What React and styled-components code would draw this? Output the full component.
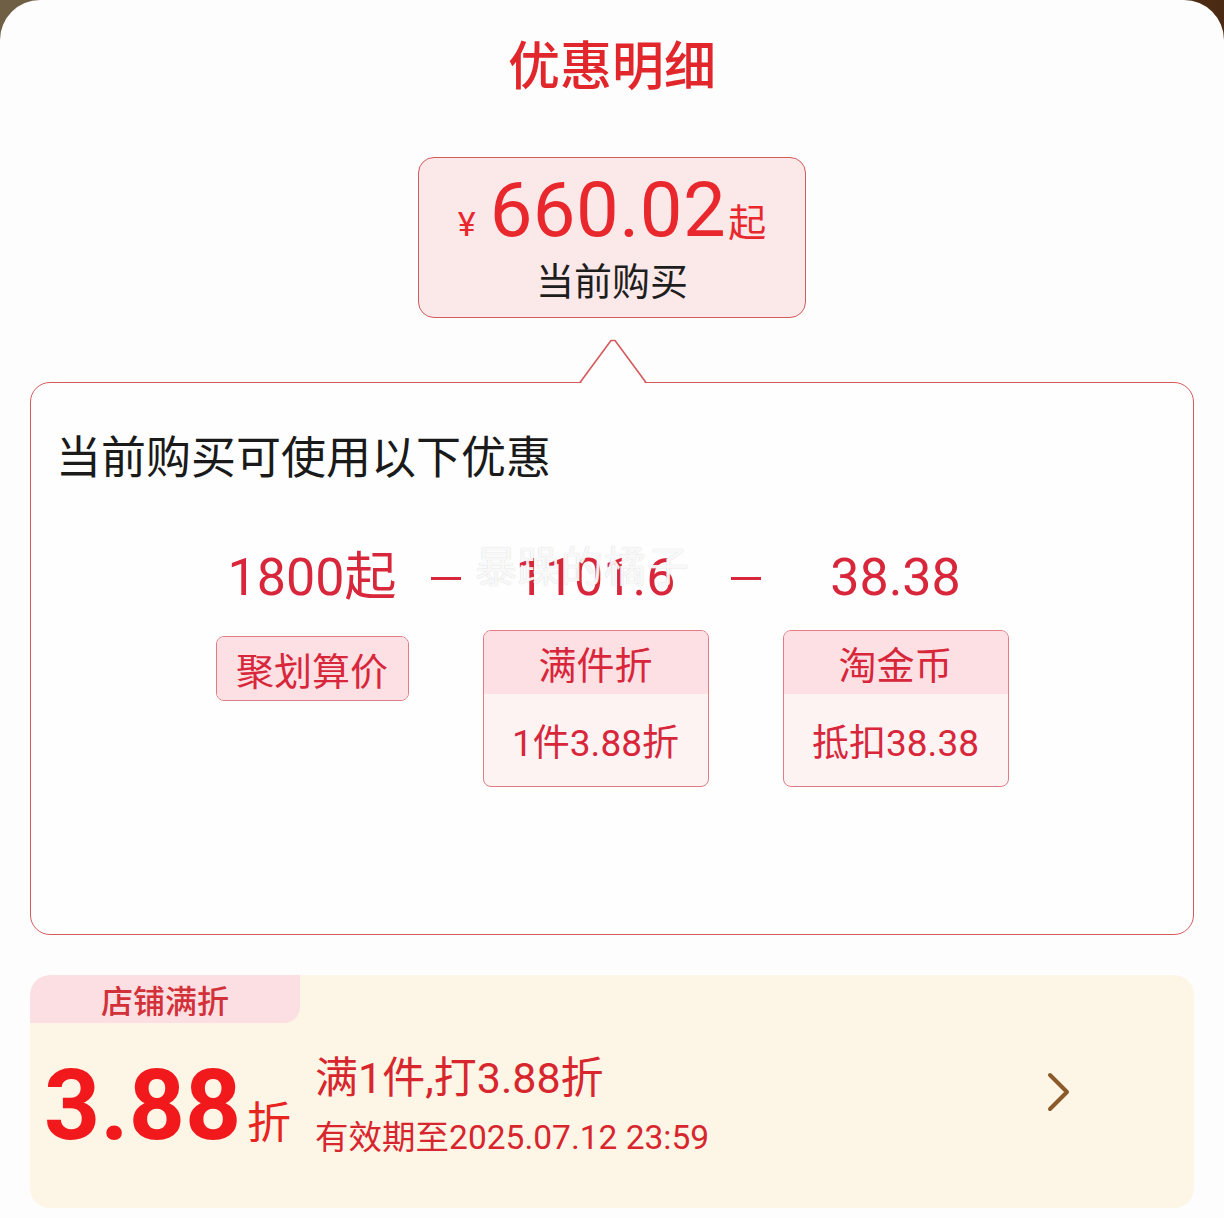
import React from "react";
import styled, { createGlobalStyle } from "styled-components";

const Global = createGlobalStyle`
  html, body { margin: 0; padding: 0; }
  body {
    font-family: Roboto, "Noto Sans CJK SC", sans-serif;
    background: #fefefe;
  }
`;

const Screen = styled.div`
  width: 1224px;
  height: 1218px;
  background: linear-gradient(90deg, #6e5f45 0%, #5e4630 50%, #4a2a12 100%);
  overflow: hidden;
`;

const Sheet = styled.div`
  position: relative;
  height: 1218px;
  background: #fdfdfd;
  border-radius: 40px 40px 0 0;
  padding: 0 30px;
  box-sizing: border-box;
  display: flex;
  flex-direction: column;
  align-items: center;
`;

const Title = styled.h1`
  margin: 33px 0 0;
  font-size: 52px;
  line-height: 60px;
  font-weight: 500;
  color: #e1262c;
  font-family: "Noto Sans CJK SC", sans-serif;
`;

const PriceBox = styled.div`
  margin-top: 64px;
  width: 388px;
  height: 161px;
  box-sizing: border-box;
  border: 1.5px solid #d65a5c;
  border-radius: 16px;
  background: #fbe8e9;
  display: flex;
  flex-direction: column;
  align-items: center;
`;

const PriceLine = styled.div`
  display: flex;
  align-items: baseline;
  color: #e9282e;
  margin-top: 8px;
  height: 88px;
`;

const Yen = styled.span`
  font-size: 34px;
  margin-right: 14px;
`;

const Amount = styled.span`
  font-size: 76px;
  line-height: 88px;
  letter-spacing: 0.5px;
`;

const Qi = styled.span`
  font-size: 38px;
  font-family: "Noto Sans CJK SC", sans-serif;
  margin-left: 2px;
`;

const PriceLabel = styled.div`
  font-size: 38px;
  line-height: 50px;
  color: #1e1e1e;
  font-family: "Noto Sans CJK SC", sans-serif;
`;

const Panel = styled.div`
  position: relative;
  margin-top: 64px;
  align-self: stretch;
  height: 553px;
  box-sizing: border-box;
  border: 1.5px solid #d65a5c;
  border-radius: 20px;
  background: #fefefe;
  padding: 44px 0 0 25px;
`;

const Arrow = styled.svg`
  position: absolute;
  left: 549px;
  top: -44px;
  width: 66px;
  height: 46px;
  overflow: visible;
`;

const PanelHeading = styled.div`
  font-size: 45px;
  line-height: 56px;
  color: #1a1a1a;
  font-family: "Noto Sans CJK SC", sans-serif;
`;

const Flow = styled.div`
  display: flex;
  justify-content: center;
  align-items: flex-start;
  gap: 20px;
  margin: 63px 25px 0 0;
`;

const Column = styled.div`
  display: flex;
  flex-direction: column;
  align-items: center;
`;

const Value = styled.div`
  font-size: 52px;
  line-height: 64px;
  height: 64px;
  color: #d8263b;
  white-space: nowrap;
`;

const Minus = styled.div`
  width: 30px;
  height: 64px;
  display: flex;
  align-items: center;
  margin: 0 2px;
  &::before {
    content: "";
    display: block;
    width: 30px;
    height: 3px;
    background: #d8263b;
  }
`;

const Tag = styled.div`
  margin-top: ${(p) => p.$offset || 0}px;
  box-sizing: border-box;
  width: ${(p) => p.$w}px;
  border: 1.5px solid #e07c82;
  border-radius: 8px;
  overflow: hidden;
  background: #fdf3f3;
  color: #d8263b;
  font-family: "Noto Sans CJK SC", sans-serif;
`;

const TagHead = styled.div`
  height: ${(p) => p.$h}px;
  background: #fde0e3;
  display: flex;
  align-items: center;
  justify-content: center;
  font-size: 38px;
`;

const TagBody = styled.div`
  height: 92px;
  display: flex;
  align-items: center;
  justify-content: center;
  font-size: 37px;
  font-family: Roboto, "Noto Sans CJK SC", sans-serif;
`;

const Watermark = styled.div`
  position: absolute;
  left: 444px;
  top: 150px;
  font-size: 42px;
  letter-spacing: 1px;
  color: rgba(255, 255, 255, 0.9);
  text-shadow: 0 0 1px rgba(150, 150, 150, 0.5);
  font-family: "Noto Sans CJK SC", sans-serif;
  pointer-events: none;
`;

const ShopCard = styled.div`
  margin-top: 40px;
  align-self: stretch;
  height: 233px;
  border-radius: 20px;
  background: #fdf5e6;
  display: flex;
  flex-direction: column;
  overflow: hidden;
`;

const ShopTag = styled.div`
  width: 270px;
  height: 48px;
  background: #fcdfe2;
  border-radius: 20px 0 16px 0;
  color: #d33139;
  font-size: 32px;
  line-height: 48px;
  text-align: center;
  font-family: "Noto Sans CJK SC", sans-serif;
  font-weight: 500;
`;

const ShopRow = styled.div`
  display: flex;
  align-items: center;
  padding: 28px 0 0 14px;
`;

const Big = styled.div`
  display: flex;
  align-items: baseline;
  color: #f2191c;
`;

const BigNum = styled.span`
  font-size: 98px;
  font-weight: 700;
  line-height: 110px;
`;

const BigUnit = styled.span`
  font-size: 44px;
  margin-left: 6px;
  color: #e8241f;
  font-family: "Noto Sans CJK SC", sans-serif;
`;

const Info = styled.div`
  display: flex;
  flex-direction: column;
  margin-left: 24px;
  color: #d8262e;
`;

const InfoMain = styled.div`
  font-size: 43px;
  line-height: 52px;
`;

const InfoSub = styled.div`
  font-size: 33.5px;
  line-height: 44px;
  margin-top: 12px;
`;

const Chevron = styled.svg`
  margin-left: auto;
  margin-right: 122px;
  margin-bottom: 28px;
  width: 26px;
  height: 42px;
`;

export default function App() {
  return (
    <>
      <Global />
      <Screen>
        <Sheet>
          <Title>优惠明细</Title>
          <PriceBox>
            <PriceLine>
              <Yen>¥</Yen>
              <Amount>660.02</Amount>
              <Qi>起</Qi>
            </PriceLine>
            <PriceLabel>当前购买</PriceLabel>
          </PriceBox>
          <Panel>
            <Arrow viewBox="0 0 66 46">
              <polygon points="0,45.5 31,2 35,2 66,45.5" fill="#fefefe" />
              <polyline
                points="0,43.5 31,1.5 35,1.5 66,43.5"
                fill="none"
                stroke="#d65a5c"
                strokeWidth="1.6"
                strokeLinejoin="round"
              />
            </Arrow>
            <PanelHeading>当前购买可使用以下优惠</PanelHeading>
            <Flow>
              <Column>
                <Value>1800起</Value>
                <Tag $w={193} $offset={26}>
                  <TagHead $h={63}>聚划算价</TagHead>
                </Tag>
              </Column>
              <Minus />
              <Column>
                <Value>1101.6</Value>
                <Tag $w={226} $offset={20}>
                  <TagHead $h={63}>满件折</TagHead>
                  <TagBody>1件3.88折</TagBody>
                </Tag>
              </Column>
              <Minus />
              <Column>
                <Value>38.38</Value>
                <Tag $w={226} $offset={20}>
                  <TagHead $h={63}>淘金币</TagHead>
                  <TagBody>抵扣38.38</TagBody>
                </Tag>
              </Column>
            </Flow>
            <Watermark>暴躁的橘子</Watermark>
          </Panel>
          <ShopCard>
            <ShopTag>店铺满折</ShopTag>
            <ShopRow>
              <Big>
                <BigNum>3.88</BigNum>
                <BigUnit>折</BigUnit>
              </Big>
              <Info>
                <InfoMain>满1件,打3.88折</InfoMain>
                <InfoSub>有效期至2025.07.12 23:59</InfoSub>
              </Info>
              <Chevron viewBox="0 0 26 42">
                <polyline
                  points="4,4 21,21 4,38"
                  fill="none"
                  stroke="#8c5a2a"
                  strokeWidth="4"
                  strokeLinecap="round"
                  strokeLinejoin="round"
                />
              </Chevron>
            </ShopRow>
          </ShopCard>
        </Sheet>
      </Screen>
    </>
  );
}
